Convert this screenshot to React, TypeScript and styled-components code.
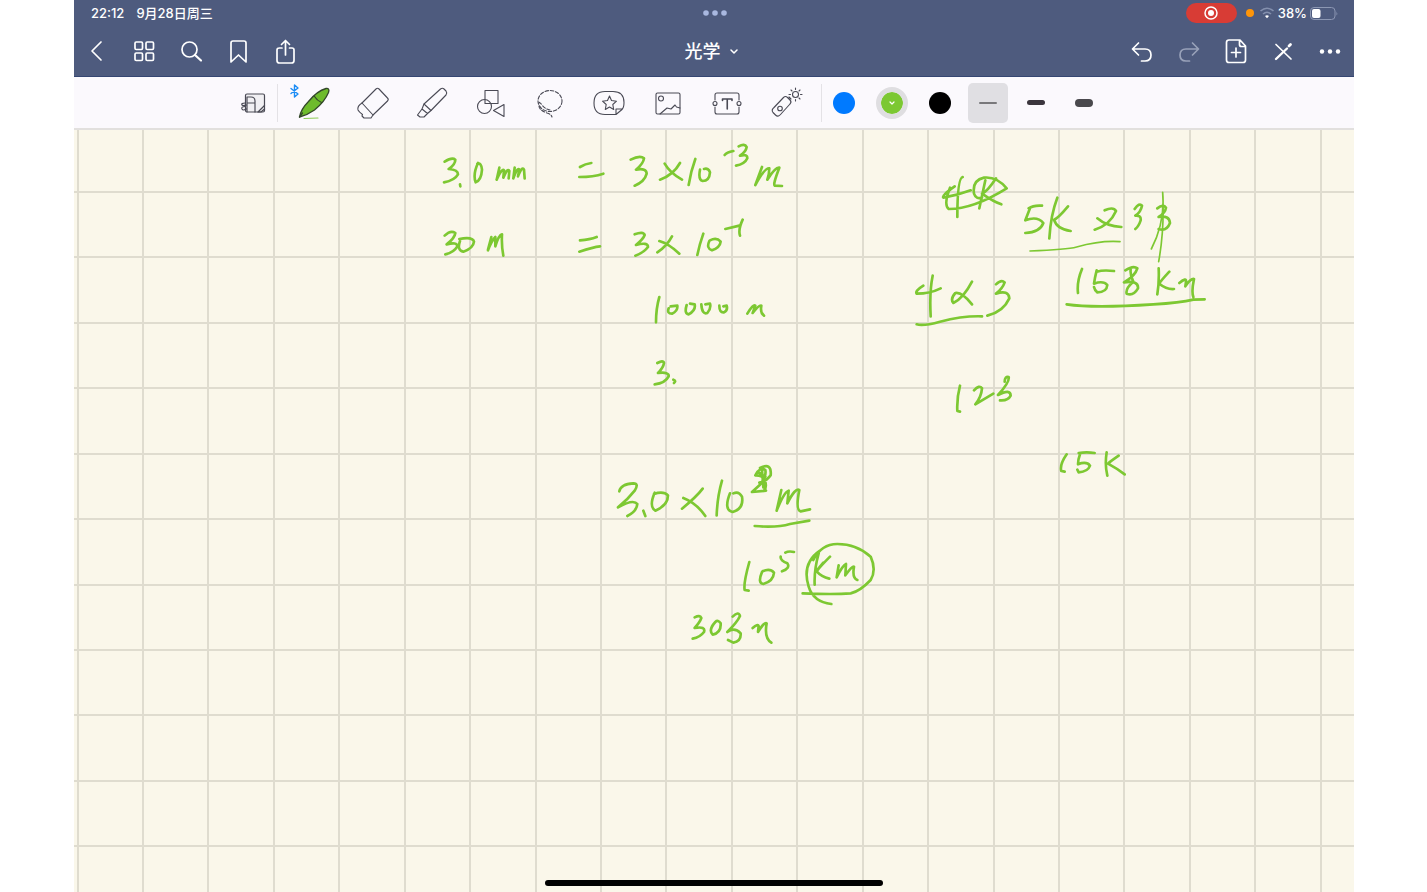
import React from "react";
import styled, { createGlobalStyle } from "styled-components";

const GlobalStyle = createGlobalStyle`
  * { box-sizing: border-box; }
  body {
    margin: 0;
    background: #ffffff;
    font-family: Inter, "Noto Sans CJK SC", "Liberation Sans", sans-serif;
  }
`;

const Device = styled.main`
  min-height: 100vh;
  margin: 0 73px 0 74px;
  display: flex;
  flex-direction: column;
`;

const Header = styled.header`
  background: #4e5b7e;
  color: #ffffff;
  border-bottom: 1px solid #354672;
`;

const ThreeColumns = styled.div`
  display: grid;
  grid-template-columns: 1fr auto 1fr;
  align-items: center;
`;

const StatusBar = styled(ThreeColumns)`
  height: 26px;
  padding: 0 16px 0 17px;
  font-size: 13px;
  line-height: 16px;
  font-weight: 500;
`;

const NavBar = styled(ThreeColumns)`
  height: 50px;
  padding: 0 12px 0 11px;
`;

const Cluster = styled.div<{ $gap: number; $end?: boolean }>`
  display: flex;
  align-items: center;
  gap: ${(p) => p.$gap}px;
  justify-content: ${(p) => (p.$end ? "flex-end" : "flex-start")};
`;

const PlainButton = styled.button`
  display: flex;
  align-items: center;
  justify-content: center;
  padding: 0;
  border: 0;
  background: transparent;
  color: inherit;
  font-family: inherit;
  cursor: pointer;
`;

const NavButton = styled(PlainButton)`
  width: 24px;
  height: 32px;
  &:disabled { color: #98a1b9; cursor: default; }
`;

const TitleButton = styled(PlainButton)`
  gap: 8px;
  padding: 2px 4px 0 0;
  font-size: 18px;
  line-height: 24px;
  font-weight: 500;
`;

const RecordingPill = styled.span`
  display: flex;
  align-items: center;
  justify-content: center;
  width: 51px;
  height: 20px;
  border-radius: 10px;
  background: #d83c35;
`;

const MicDot = styled.span`
  width: 8px;
  height: 8px;
  margin: 0 2px 0 6px;
  border-radius: 50%;
  background: #ff9509;
`;

const StatusIcons = styled(Cluster)`
  svg { display: block; }
`;

const Toolbar = styled.div`
  display: flex;
  align-items: center;
  justify-content: center;
  height: 53px;
  padding-right: 87px;
  background: #fbf9fd;
  border-bottom: 2px solid #e2e0de;
`;

const Divider = styled.span`
  width: 1px;
  height: 38px;
  margin: 0 6px;
  background: #e4e2e6;
`;

const ToolButton = styled(PlainButton)<{ $width?: number }>`
  width: ${(p) => p.$width ?? 59}px;
  height: 44px;
  color: #4a4a55;
  svg { overflow: visible; }
`;

const ColorButton = styled(PlainButton)<{ $color: string; $active?: boolean }>`
  width: 32px;
  height: 32px;
  border-radius: 50%;
  border: 5px solid ${(p) => (p.$active ? "#dfdee1" : "transparent")};
  background: ${(p) => p.$color};
  background-clip: padding-box;
  color: #ffffff;
`;

const StrokeButton = styled(PlainButton)<{ $active?: boolean }>`
  width: 40px;
  height: 40px;
  border-radius: 5px;
  background: ${(p) => (p.$active ? "#e0dfe3" : "transparent")};
`;

const StrokeSample = styled.span<{ $thickness: number; $color: string }>`
  width: 18px;
  height: ${(p) => p.$thickness}px;
  border-radius: 4px;
  background: ${(p) => p.$color};
`;

const StrokeGroup = styled(Cluster)`
  margin-left: 12px;
`;

const Page = styled.section`
  position: relative;
  flex: 1;
  display: flex;
  background: #faf7ea;
  overflow: hidden;
`;

const Paper = styled.svg`
  display: block;
  flex: 1;
  width: 100%;
`;

const HomeIndicator = styled.div`
  position: absolute;
  left: 0;
  right: 0;
  bottom: 6px;
  width: 338px;
  height: 6px;
  margin: 0 auto;
  border-radius: 3px;
  background: #000000;
`;

type IconProps = { w: number; h: number; sw?: number; children: React.ReactNode };

const Icon = ({ w, h, sw = 1.7, children }: IconProps) => (
  <svg
    width={w}
    height={h}
    viewBox={`0 0 ${w} ${h}`}
    fill="none"
    stroke="currentColor"
    strokeWidth={sw}
    strokeLinecap="round"
    strokeLinejoin="round"
    aria-hidden="true"
  >
    {children}
  </svg>
);

const navLeft = [
  { label: "返回", icon: <path d="M16 4 7 13l9 9" /> },
  {
    label: "缩略图",
    icon: (
      <>
        <rect x="3" y="4" width="7.5" height="7.5" rx="1.2" />
        <rect x="14" y="4" width="7.5" height="7.5" rx="1.2" />
        <rect x="3" y="15" width="7.5" height="7.5" rx="1.2" />
        <rect x="14" y="15" width="7.5" height="7.5" rx="1.2" />
      </>
    ),
  },
  {
    label: "搜索",
    icon: (
      <>
        <circle cx="10.5" cy="11.5" r="7.5" />
        <path d="m16 17 6 5.500" strokeWidth="2.2" />
      </>
    ),
  },
  { label: "书签", icon: <path d="M5 24V5Q5 3 7 3h11Q20 3 20 5v19l-7.500-7z" /> },
  {
    label: "分享",
    icon: (
      <>
        <path d="M9 10H6.500Q4 10 4 12v10.500q0 2.500 2.500 2.500h12q2.500 0 2.500-2.500V12Q21 10 19 10h-2.500" />
        <path d="M12.500 17V2.500M8.500 6.500l4-4 4 4" />
      </>
    ),
  },
];

const navRight = [
  { label: "撤销", icon: <path d="m8.500 5-6 6 6 6M3 11h12q6 0 6 6t-6 6h-3.500" /> },
  { label: "重做", disabled: true, icon: <path d="m15.500 5 6 6-6 6M21 11H9q-6 0-6 6t6 6h3.500" /> },
  {
    label: "添加页面",
    icon: (
      <>
        <path d="M16 2H5Q2.500 2 2.500 4.500V22Q2.500 24.500 5 24.500h14q2.500 0 2.500-2.500V8zM15.500 2.500v4q0 2 2 2h4" />
        <path d="M12 10v9M7.500 14.500h9" />
      </>
    ),
  },
  {
    label: "只读模式",
    icon: (
      <>
        <path d="m5 6.500 15 14.500" />
        <path d="M5 21 16 10.500" strokeWidth="2.400" />
        <path d="m18 8 1.500-1.500" strokeWidth="2.800" />
      </>
    ),
  },
  {
    label: "更多",
    icon: (
      <g fill="currentColor" stroke="none">
        <circle cx="4" cy="13.500" r="2.200" />
        <circle cx="12" cy="13.500" r="2.200" />
        <circle cx="20" cy="13.500" r="2.200" />
      </g>
    ),
  },
];

const tools = [
  {
    label: "钢笔",
    icon: (
      <>
        <path d="m-3 4.500 7 5.500-3.500 3V1l3.500 3-7 5.500" stroke="#1b8cf5" strokeWidth="1.400" />
        <path d="M5.500 33q1.500-8 9-15.500Q23 7 32 4.500q4-.500 2.500 4-4 9.500-14 17.500-7 5-15 7z" fill="#6ebb2c" stroke="#33472a" strokeWidth="1.300" />
        <path d="M20.500 12.500q2.500 4 7 6M5.500 33l3-4" stroke="#33472a" strokeWidth="1.300" />
        <path d="M10 34.500q7-.300 14-.500" stroke="#8dcc55" />
      </>
    ),
  },
  {
    label: "橡皮擦",
    icon: (
      <>
        <path d="M23 5q1.500-1.500 3 0l8.500 9q1.500 1.500 0 3L20 31 9 19z" />
        <path d="M9 19q-5 3-4 7 1 2 4.500 4.500l-.500 1.500 2 2h7l2-3" />
      </>
    ),
  },
  {
    label: "荧光笔",
    icon: (
      <>
        <path d="M28.500 5q2-1.500 3.500 0l2 2q1.500 2 0 4L19 26.500 12 20z" />
        <path d="m12 20-2 5 5.500 4.500 3.500-3M10 25l-4.500 6 2.500 2h4l3.500-3.500" />
      </>
    ),
  },
  {
    label: "形状",
    icon: (
      <>
        <rect x="14" y="6.500" width="13" height="13" />
        <circle cx="13.500" cy="22.500" r="7" />
        <path d="M33 20.500v12L22.500 26.500z" />
      </>
    ),
  },
  {
    label: "套索",
    icon: (
      <g strokeDasharray="3.500 1.800">
        <ellipse cx="20" cy="17" rx="12" ry="10.500" />
        <path d="M9 19q0-2 3 2t8 5M9 22q0 4 8 7 4 1 5 4" />
      </g>
    ),
  },
  {
    label: "贴纸",
    icon: (
      <>
        <path d="M16 7.500h8q11 0 11 11 0 5-2 7l-6 5H16Q5 30.500 5 19T16 7.500zM27 30.500V25h6" />
        <path d="m20.500 12 2 4.500 5 .700-3.700 3.300.900 5-4.200-2.500-4.200 2.500.900-5-3.700-3.300 5-.700z" />
      </>
    ),
  },
  {
    label: "图片",
    icon: (
      <>
        <rect x="8" y="9" width="24" height="21" rx="1.500" />
        <circle cx="13" cy="14.500" r="2.500" />
        <path d="m12 30 7-6 4 1 4-4 1.500 2 3.500 1" />
      </>
    ),
  },
  {
    label: "文本框",
    icon: (
      <>
        <path d="M8 16v-5q0-2 2-2h20q2 0 2 2v5M8 23v5q0 2 2 2h20q2 0 2-2v-5" />
        <circle cx="8" cy="19.500" r="2" />
        <circle cx="32" cy="19.500" r="2" />
        <path d="M15.500 16.500V15h9.500v1.500M20.250 15v10" strokeWidth="1.600" />
      </>
    ),
  },
  {
    label: "激光笔",
    icon: (
      <>
        <path d="m8 23.500 9.500-10q2-2 4 0L24 16q2 2 0 4l-9.500 10.500q-2.500 3-5 .500L7 28.500q-2-2.500 1-5zM23 13l2 2" />
        <circle cx="14" cy="24.500" r="2.300" />
        <circle cx="29.500" cy="10.500" r="3" />
        <path d="M29.500 4v1.500M29.500 15.500V17M23 10.500h1.500M34.500 10.500H36M25 6l1 1M33 14l1 1M33 7l1-1" />
      </>
    ),
  },
];

// Each block is a patch of handwriting recorded at three units per page pixel.
const ink = [
  {
    x: 430,
    y: 135,
    strokes: [
      "M44 80Q66 66 76 74Q76 88 56 102Q84 104 84 118Q74 136 42 142M90 148L91 154",
      "M144 84Q128 118 137 142Q154 136 156 104Q154 82 142 86",
      "M200 134L208 98M200 134Q216 98 222 106L220 128Q232 98 238 108L236 130",
      "M250 130L254 98M250 130Q262 96 268 104L264 124Q276 92 282 104L284 130",
      "M450 96Q466 86 484 84M448 126Q490 126 520 116",
      "M602 74Q630 60 642 70Q640 86 618 104Q650 98 650 116Q644 140 614 152",
      "M690 134Q730 120 750 84M704 86Q720 114 756 134",
      "M796 72Q782 110 776 150",
      "M810 104Q804 134 818 138Q838 138 840 112Q836 98 822 102",
      "M884 60Q890 52 910 48",
      "M926 34Q944 24 950 36Q948 50 930 62Q952 56 952 70Q944 88 918 92",
      "M976 150L996 96M976 150Q1006 96 1018 100Q1018 116 1012 134Q1036 96 1048 98Q1028 150 1034 152L1056 153",
      "M44 302Q62 284 76 294Q74 310 50 328Q82 320 82 334Q72 352 46 358",
      "M90 318Q80 346 100 350Q130 340 132 320Q128 304 88 312",
      "M174 344L184 306M174 346Q184 318 196 306L196 334Q206 300 216 298Q214 330 220 362",
      "M450 316Q480 314 500 306M448 350Q490 336 510 334",
      "M614 298Q640 288 644 300Q640 312 618 330Q654 320 654 336Q640 354 616 362",
      "M682 352Q710 334 726 304M688 318Q716 326 748 356",
      "M820 296Q808 330 802 360",
      "M838 318Q828 340 846 346Q870 338 872 320Q860 306 840 316",
      "M886 282L928 272M938 254Q924 284 930 302",
    ],
  },
  {
    x: 900,
    y: 165,
    strokes: [
      "M164 64Q124 92 130 98Q170 92 212 76M188 36Q172 40 172 156",
      "M150 68Q130 120 146 132Q220 132 320 70Q290 34 252 38Q216 46 222 86Q228 104 246 98",
      "M256 46L238 130M288 40Q262 80 246 86Q280 110 304 118",
      "M390 130L376 166Q412 152 430 174Q420 202 376 204M386 130Q400 120 426 122",
      "M472 98Q452 150 448 220M504 124Q474 160 462 164Q470 192 512 198",
      "M614 136Q640 124 648 138Q630 180 584 194M592 160Q620 184 664 186",
      "M704 132Q718 112 726 122Q722 142 706 152Q724 150 722 166Q716 184 706 192",
      "M772 130Q790 116 798 128Q796 144 776 156Q808 150 810 174Q800 200 776 192",
      "M70 362Q44 378 50 386Q90 386 122 370M98 332Q88 380 92 454",
      "M216 350Q190 400 160 414Q150 402 166 384Q186 380 216 418",
      "M288 358Q304 342 314 352Q308 370 288 386Q326 374 328 400Q310 440 262 452",
      "M50 478Q70 484 120 470Q190 452 246 454",
      "M546 312Q530 350 534 384",
      "M590 316Q584 340 582 356Q610 346 622 360Q620 382 592 382Q584 376 582 366M590 320Q610 314 642 318",
      "M676 316Q700 300 712 310Q706 332 672 352Q716 346 714 370Q700 394 680 386Q676 370 700 350Q690 330 692 314",
      "M776 310Q778 350 772 388M808 320Q780 350 778 356Q800 374 822 372",
      "M838 354Q860 336 858 350L856 364Q872 340 882 342Q874 380 880 396",
      "M500 418Q580 430 760 418Q840 414 880 404L914 403",
    ],
    fine: ["M390 258Q500 254 530 246Q600 226 660 230", "M788 82Q796 170 754 252M788 82Q794 190 776 290"],
  },
  {
    x: 600,
    y: 285,
    strokes: [
      "M178 36Q168 70 168 112",
      "M206 70Q200 86 216 86Q234 78 232 62L212 64",
      "M260 60Q252 86 266 88Q288 76 284 58L270 56",
      "M304 58Q306 90 322 84Q334 70 330 56L316 58",
      "M358 62Q358 84 372 82Q384 76 380 62L370 64",
      "M442 86Q460 56 466 62L458 84Q478 58 484 62Q480 84 492 92",
      "M172 234Q190 224 192 234Q190 248 174 264Q208 260 206 274Q196 294 164 298M220 284Q230 288 222 294",
    ],
  },
  {
    x: 600,
    y: 450,
    strokes: [
      "M58 124Q62 102 100 100Q118 100 104 122Q84 148 54 172Q100 146 112 162Q110 184 82 198M130 182L136 198",
      "M164 128Q146 170 166 182Q204 166 204 136Q190 122 162 132",
      "M246 176Q290 140 308 116M250 144Q290 160 316 198",
      "M366 92Q352 140 350 196",
      "M390 130Q370 180 398 186Q432 176 426 140Q416 122 400 130",
      "M466 76Q480 48 496 60Q500 80 480 104L456 126L498 122M480 54Q516 36 512 76Q500 94 478 98M468 76Q490 76 494 90Q502 110 492 122M474 66L496 80M486 60L490 112",
      "M530 182L544 120M530 182Q552 126 566 122L562 160Q586 112 598 120Q586 180 602 184L630 178",
      "M464 228Q530 234 570 222L628 212",
      "M448 336Q430 400 434 420L446 422",
      "M486 366Q472 400 490 402Q520 394 522 368Q510 354 488 364",
      "M542 320Q540 332 562 340Q572 354 546 364M556 308Q566 302 582 306",
      "M656 310Q642 360 644 404M690 320Q660 350 650 364Q664 380 688 386M650 362L670 338",
      "M710 382L716 346M710 382Q728 346 738 342L736 376Q756 348 762 350Q756 384 772 390",
      "M640 330Q664 282 712 282Q770 282 812 320Q830 360 812 390Q780 424 752 430Q700 434 608 430",
      "M660 302Q604 340 626 410Q640 456 694 462",
      "M284 502Q300 494 304 504Q300 516 284 534Q318 528 312 546Q300 562 278 566",
      "M346 516Q324 540 338 554Q364 548 362 520Q354 508 346 516",
      "M398 500Q416 482 420 498Q412 516 382 546Q404 530 422 550Q424 574 400 578L384 570",
      "M458 534Q474 520 476 528L474 546Q494 514 500 520Q492 564 514 578",
    ],
  },
  {
    x: 930,
    y: 365,
    strokes: [
      "M90 62Q80 100 82 138L90 140",
      "M132 76Q148 58 156 70Q154 96 136 118Q160 104 190 86",
      "M224 50Q224 34 236 36Q240 50 204 90Q242 70 242 92Q234 108 210 106",
      "M410 268Q388 300 394 318L404 320",
      "M450 268Q444 284 444 298Q470 288 480 302Q474 320 446 322L442 314M446 264Q470 260 494 264",
      "M530 262Q524 300 532 332M566 272Q540 290 534 296Q560 310 584 328",
    ],
  },
];

const gridStep = 65.43;
const gridPath = [
  ...Array.from({ length: 20 }, (_, i) => `M${Math.round(77.6 + i * gridStep)} 129v763`),
  ...Array.from({ length: 11 }, (_, i) => `M74 ${Math.round(192 + i * gridStep)}h1280`),
].join("");

export default function App() {
  return (
    <>
      <GlobalStyle />
      <Device>
        <Header>
          <StatusBar>
            <Cluster $gap={12}>
              <span>22:12</span>
              <span>9月28日周三</span>
            </Cluster>
            <svg width="24" height="6" viewBox="0 0 24 6" fill="#a9b8e0" aria-hidden="true">
              <circle cx="3" cy="3" r="2.800" />
              <circle cx="12" cy="3" r="2.800" />
              <circle cx="21" cy="3" r="2.800" />
            </svg>
            <StatusIcons $gap={3} $end>
              <RecordingPill>
                <svg width="14" height="14" viewBox="0 0 14 14" aria-hidden="true">
                  <circle cx="7" cy="7" r="6" fill="none" stroke="#fff" strokeWidth="1.500" />
                  <circle cx="7" cy="7" r="3" fill="#fff" />
                </svg>
              </RecordingPill>
              <MicDot />
              <svg width="16" height="12" viewBox="0 0 16 12" fill="none" stroke="#8490ae" strokeWidth="1.600" aria-hidden="true">
                <path d="M1.500 4Q8-1.500 14.500 4M4 7q4-3.500 8 0" />
                <path d="M6 9q2-1.500 4 0l-2 2.300z" fill="#fff" stroke="none" />
              </svg>
              <span>38%</span>
              <svg width="28" height="13" viewBox="0 0 28 13" aria-hidden="true">
                <rect x="0.500" y="0.500" width="24.500" height="12" rx="3.500" fill="none" stroke="#8c97b3" />
                <rect x="2" y="2" width="8.500" height="9" rx="2" fill="#fff" />
                <path d="M26.500 4.500q1.500 2 0 4z" fill="#8c97b3" />
              </svg>
            </StatusIcons>
          </StatusBar>
          <NavBar>
            <Cluster $gap={23}>
              {navLeft.map((item) => (
                <NavButton key={item.label} type="button" aria-label={item.label}>
                  <Icon w={24} h={26}>{item.icon}</Icon>
                </NavButton>
              ))}
            </Cluster>
            <TitleButton type="button">
              光学
              <Icon w={10} h={6} sw={1.5}>
                <path d="m2 1 3 3 3-3" />
              </Icon>
            </TitleButton>
            <Cluster $gap={23} $end>
              {navRight.map((item) => (
                <NavButton key={item.label} type="button" aria-label={item.label} disabled={item.disabled}>
                  <Icon w={24} h={26}>{item.icon}</Icon>
                </NavButton>
              ))}
            </Cluster>
          </NavBar>
        </Header>

        <Toolbar role="toolbar">
          <ToolButton type="button" $width={34} aria-label="放大窗口">
            <Icon w={28} h={24} sw={1.2}>
              <rect x="5.500" y="3" width="19" height="18" rx="1.500" fill="#f1f0f3" />
              <path d="M7 6h4q4 0 4 4v11M7 12h8M5 12q-4 0-3 2 1 1 4 0M5 15.500q-4 0-3 2.500 1 2 4 0M7 6v15M18 21l6.500-6.500M18 21h3l3.500-3" />
            </Icon>
          </ToolButton>
          <Divider />
          {tools.map((tool) => (
            <ToolButton key={tool.label} type="button" aria-label={tool.label}>
              <Icon w={40} h={38} sw={1.1}>{tool.icon}</Icon>
            </ToolButton>
          ))}
          <Divider />
          <Cluster $gap={16}>
            <ColorButton type="button" $color="#007aff" aria-label="蓝色" />
            <ColorButton type="button" $color="#7cc832" $active aria-label="绿色" aria-pressed="true">
              <Icon w={8} h={6} sw={1.2}>
                <path d="m2 2 2 2 2-2" />
              </Icon>
            </ColorButton>
            <ColorButton type="button" $color="#000000" aria-label="黑色" />
          </Cluster>
          <StrokeGroup $gap={8}>
            <StrokeButton type="button" $active aria-label="细" aria-pressed="true">
              <StrokeSample $thickness={2} $color="#79787b" />
            </StrokeButton>
            <StrokeButton type="button" aria-label="中">
              <StrokeSample $thickness={5} $color="#3b353d" />
            </StrokeButton>
            <StrokeButton type="button" aria-label="粗">
              <StrokeSample $thickness={8} $color="#4a494d" />
            </StrokeButton>
          </StrokeGroup>
        </Toolbar>

        <Page>
          <Paper viewBox="74 130 1280 762" preserveAspectRatio="xMidYMin slice" aria-hidden="true">
            <path d={gridPath} stroke="#b4b0a2" strokeOpacity="0.38" strokeWidth="2" fill="none" />
            <g fill="none" stroke="#7dc832" strokeLinecap="round" strokeLinejoin="round">
              {ink.map((patch) => (
                <g key={`${patch.x}-${patch.y}`} transform={`translate(${patch.x} ${patch.y}) scale(0.33333)`}>
                  <path d={patch.strokes.join("")} strokeWidth="8" />
                  {patch.fine && <path d={patch.fine.join("")} strokeWidth="5" />}
                </g>
              ))}
            </g>
          </Paper>
          <HomeIndicator />
        </Page>
      </Device>
    </>
  );
}
